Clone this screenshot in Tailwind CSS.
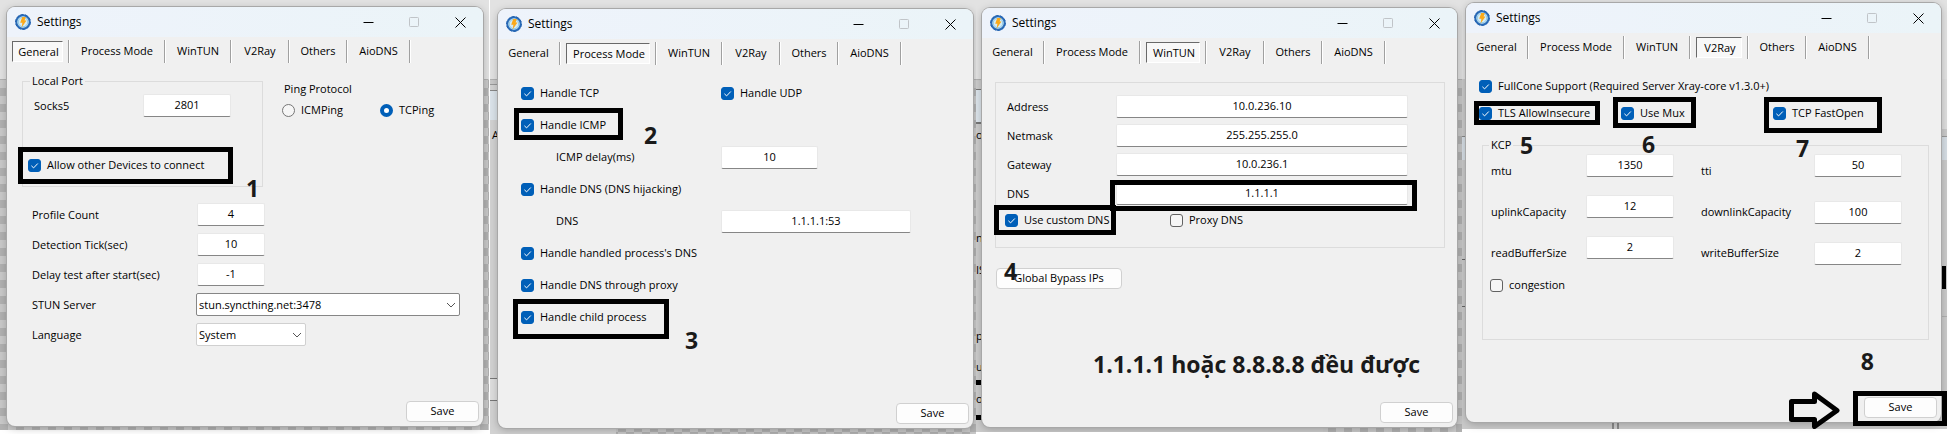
<!DOCTYPE html>
<html lang="en">
<head>
<meta charset="utf-8">
<title>Settings</title>
<script src="https://cdn.jsdelivr.net/npm/@tailwindcss/browser@4"></script>
</head>
<body class="bg-white font-['Open_Sans','Noto_Sans',sans-serif] text-[11px] leading-[14px] text-black">
<svg class="hidden">
  <symbol id="logo" viewBox="0 0 16 16">
    <circle cx="8" cy="8" r="6.7" fill="#d5ebf5" stroke="#2b6cb8" stroke-width="2"/>
    <circle cx="8" cy="8" r="7.4" fill="none" stroke="#1f5fae" stroke-width="1" stroke-dasharray="3 1.6"/>
    <circle cx="8" cy="8" r="4.8" fill="none" stroke="#8cc8e6" stroke-width="1"/>
    <path d="M7.2 3h3.6L9.6 6.4h1.9L6.6 13.4l.8-4.6H5.2z" fill="#fba919"/>
  </symbol>
  <symbol id="tick" viewBox="0 0 13 13"><path d="M3.4 6.8l2.2 2.1 4.2-4.4" fill="none" stroke="#fff" stroke-width="1"/></symbol>
  <symbol id="chevron" viewBox="0 0 10 6"><path d="M1 1l4 4 4-4" fill="none" stroke="#555" stroke-width="1"/></symbol>
</svg>

<main id="app" class="grid grid-cols-[490fr_486fr_486fr_485fr] items-start pr-1.5"></main>

<script>
const tabNames = [
  ['General', 'w-[51px]'], ['Process Mode', 'w-[84px]'], ['WinTUN', 'w-[54px]'],
  ['V2Ray', 'w-[46px]'], ['Others', 'w-[46px]'], ['AioDNS', 'w-[51px]']
];
const tabs = active => tabNames.map(([name, w]) => `
  <button role="tab" aria-selected="${name === active}" class="${w} h-[21px] shrink-0 whitespace-nowrap ${name === active
    ? 'border border-t-[#696969] border-l-[#696969] border-r-white border-b-white bg-[#f8f8f8] pl-0.5'
    : 'pb-0.5'}">${name}</button>
  <span class="mx-[5px] h-[23px] w-0.5 shrink-0 border-l border-[#a0a0a0] bg-white"></span>`).join('');

const check = (label, on = true) => `
  <label class="flex items-center gap-1.5 whitespace-nowrap">
    <span class="relative block size-[13px]">
      <input type="checkbox" ${on ? 'checked' : ''} class="block size-[13px] appearance-none rounded-[3px] border border-[#626262] bg-[#f6f6f6] checked:border-[#005fb8] checked:bg-[#005fb8]">
      ${on ? '<svg class="pointer-events-none absolute inset-0 size-[13px]"><use href="#tick"/></svg>' : ''}
    </span>${label}
  </label>`;
const radio = (label, on) => `
  <label class="flex items-center gap-1.5"><input type="radio" name="ping" ${on ? 'checked' : ''}
    class="size-[13px] appearance-none rounded-full border border-[#767676] bg-[#f6f6f6] checked:border-4 checked:border-[#005fb8] checked:bg-white">${label}</label>`;
const input = (id, value, w) => `<input id="${id}" value="${value}" class="${w} h-[23px] rounded-[2px] border border-[#e8e8e8] border-b-[#868686] bg-white pb-0.5 text-center">`;
const select = (id, value, w, edge) => `
  <div class="relative -ml-px ${w}">
    <select id="${id}" class="h-[23px] w-full appearance-none rounded-[2px] border bg-white pl-0.5 ${edge}"><option>${value}</option></select>
    <svg class="pointer-events-none absolute top-[9px] right-1 h-1.5 w-2.5"><use href="#chevron"/></svg>
  </div>`;
const mark = cls => `<span class="pointer-events-none absolute border-5 border-black ${cls}"></span>`;
const note = (text, cls) => `<span class="absolute text-[23px] leading-6 font-bold whitespace-nowrap text-[#1a1a1a] ${cls}">${text}</span>`;

const panel = ({ outer, backdrop, active, body, notes }) => `
  <section class="relative bg-[repeating-conic-gradient(#b1b1b1_0_25%,#c9c9c9_0_50%)] bg-size-[16px_16px] ${outer}">
    <div class="absolute inset-x-0 top-0 h-[79px] bg-[#e2e2e2]"></div>
    ${backdrop}
    <div class="relative flex h-[419px] flex-col rounded-lg bg-[#f0f0f0] shadow-[0_0_0_1px_#a8a8a8,0_2px_8px_rgba(0,0,0,0.25)]">
      <header class="flex h-[30px] shrink-0 items-center rounded-t-lg bg-linear-to-r from-[#eef3fb] to-[#ebf4f8] pl-2">
        <svg class="mr-1.5 size-4"><use href="#logo"/></svg>
        <h1 class="grow text-xs">Settings</h1>
        <button aria-label="Minimize" class="grid h-[29px] w-[46px] place-items-center"><svg class="size-[11px]" viewBox="0 0 11 11"><path d="M.5 5.5h10" stroke="#000"/></svg></button>
        <button aria-label="Maximize" disabled class="grid h-[29px] w-[46px] place-items-center"><svg class="size-[11px]" viewBox="0 0 11 11"><rect x=".5" y=".5" width="9" height="9" rx=".8" fill="none" stroke="#c0c4c8"/></svg></button>
        <button aria-label="Close" class="grid h-[29px] w-[46px] place-items-center"><svg class="size-[11px]" viewBox="0 0 11 11"><path d="M.5.5l10 10m0-10l-10 10" stroke="#000"/></svg></button>
      </header>
      <nav role="tablist" class="flex items-center pt-[3px] pl-[5px]">${tabs(active)}</nav>
      <div class="grow">${body}</div>
      <footer class="flex justify-end p-1"><button class="h-[21px] w-[73px] rounded-sm border border-[#d0d0d0] bg-[#fdfdfd] pb-0.5">Save</button></footer>
      ${notes}
    </div>
  </section>`;

const general = `
  <div class="flex items-start gap-[19px] pt-[11px] pl-[15px]">
    <fieldset class="h-[113px] w-[241px] shrink-0 border border-[#dcdcdc]">
      <legend class="ml-[7px] px-0.5">Local Port</legend>
      <div class="mt-1.5 flex items-center pl-[11px]"><label for="socks" class="w-[109px]">Socks5</label>${input('socks', '2801', 'w-[88px]')}</div>
      <div class="mt-[41px] pl-[5px]">${check('Allow other Devices to connect')}</div>
    </fieldset>
    <fieldset class="mt-2">
      <legend class="pl-0.5">Ping Protocol</legend>
      <div class="mt-[7px] grid grid-cols-[98px_auto]">${radio('ICMPing', false)}${radio('TCPing', true)}</div>
    </fieldset>
  </div>
  <div class="mt-4 grid auto-rows-[23px] grid-cols-[165px_auto] items-center gap-y-[7px] pl-[25px]">
    <label for="count">Profile Count</label>${input('count', '4', 'w-[68px]')}
    <label for="tick-sec">Detection Tick(sec)</label>${input('tick-sec', '10', 'w-[68px]')}
    <label for="delay">Delay test after start(sec)</label>${input('delay', '-1', 'w-[68px]')}
    <label for="stun">STUN Server</label>${select('stun', 'stun.syncthing.net:3478', 'w-[264px]', 'border-[#868686]')}
    <label for="lang">Language</label>${select('lang', 'System', 'w-[110px]', 'border-[#d0d0d0]')}
  </div>`;

const processMode = `
  <div class="grid auto-rows-[32px] grid-cols-[200px_auto] items-center pt-3 pl-[23px]">
    ${check('Handle TCP')}${check('Handle UDP')}
    <div class="col-span-2">${check('Handle ICMP')}</div>
    <label for="icmp" class="pl-[35px]">ICMP delay(ms)</label>${input('icmp', '10', 'w-[97px]')}
    <div class="col-span-2">${check('Handle DNS (DNS hijacking)')}</div>
    <label for="pdns" class="pl-[35px]">DNS</label>${input('pdns', '1.1.1.1:53', 'w-[190px]')}
    <div class="col-span-2">${check("Handle handled process's DNS")}</div>
    <div class="col-span-2">${check('Handle DNS through proxy')}</div>
    <div class="col-span-2">${check('Handle child process')}</div>
  </div>`;

const tun = `
  <div class="mt-[18px] mr-3 ml-[13px] h-[166px] border border-[#dcdcdc] pt-3">
    <div class="grid grid-cols-[109px_auto] items-center gap-y-1.5 pl-[11px]">
      <label for="addr">Address</label>${input('addr', '10.0.236.10', 'w-[292px]')}
      <label for="mask">Netmask</label>${input('mask', '255.255.255.0', 'w-[292px]')}
      <label for="gate">Gateway</label>${input('gate', '10.0.236.1', 'w-[292px]')}
      <label for="tdns">DNS</label>${input('tdns', '1.1.1.1', 'w-[292px]')}
    </div>
    <div class="mt-2 grid grid-cols-[165px_auto] pl-[9px]">${check('Use custom DNS')}${check('Proxy DNS', false)}</div>
  </div>
  <button class="mt-5 ml-3.5 h-[21px] w-[126px] rounded-sm border border-[#d0d0d0] bg-[#fdfdfd] pb-0.5">Global Bypass IPs</button>`;

const ray = `
  <div class="pt-5 pl-[13px]">${check('FullCone Support (Required Server Xray-core v1.3.0+)')}</div>
  <div class="grid grid-cols-[142px_152px_auto] pt-[13px] pl-[13px]">${check('TLS AllowInsecure')}${check('Use Mux')}${check('TCP FastOpen')}</div>
  <fieldset class="mt-[18px] mr-3 ml-4 h-[202px] border border-[#dcdcdc]">
    <legend class="ml-1.5 px-0.5">KCP</legend>
    <div class="mt-0.5 grid auto-rows-[41px] grid-cols-[95px_115px_113px_auto] items-start pl-2">
      <label for="mtu" class="pt-2.5">mtu</label>${input('mtu', '1350', 'w-[88px]')}
      <label for="tti" class="pt-2.5">tti</label>${input('tti', '50', 'w-[88px]')}
      <label for="up" class="pt-2.5">uplinkCapacity</label>${input('up', '12', 'w-[88px]')}
      <label for="down" class="pt-2.5">downlinkCapacity</label>${input('down', '100', 'w-[88px] mt-1.5')}
      <label for="rbuf" class="pt-2.5">readBufferSize</label>${input('rbuf', '2', 'w-[88px]')}
      <label for="wbuf" class="pt-2.5">writeBufferSize</label>${input('wbuf', '2', 'w-[88px] mt-1.5')}
    </div>
    <div class="pt-px pl-[7px]">${check('congestion', false)}</div>
  </fieldset>`;

document.getElementById('app').innerHTML =
  panel({
    outer: 'h-[430px] border-r border-white pt-[7px] pr-1.5 pl-[7px]', backdrop: '', active: 'General', body: general,
    notes: mark('top-[140px] left-[11px] h-[37px] w-[215px]') + note('1', 'top-[169px] left-[239px]')
  }) +
  panel({
    outer: 'h-[434px] overflow-hidden pt-[9px] pr-[3px] pl-2', active: 'Process Mode', body: processMode,
    backdrop: `<div class="absolute top-[84px] bottom-0 left-0 w-[126px] border-t border-[#999] bg-[#d2d2d2]"></div>
      <div class="absolute top-[90px] left-0 h-[30px] w-2 border-t border-[#888] bg-[#dbe3ea]"></div>
      <span class="absolute top-[128px] left-0.5">A</span>
      <div class="absolute top-[378px] left-0 h-[23px] w-2 border-y border-[#777] bg-[#dedede]"></div>`,
    notes: mark('top-[99px] left-4 h-8 w-[109px]') + note('2', 'top-[114px] left-[146px]') +
      mark('top-[290px] left-[15px] h-10 w-[156px]') + note('3', 'top-[319px] left-[187px]')
  }) +
  panel({
    outer: 'h-[432px] overflow-hidden pt-2 pr-[5px] pl-1.5', active: 'WinTUN', body: tun,
    backdrop: `<div class="absolute top-[81px] bottom-0 left-0 w-[347px] bg-[#cbcbcb]"></div>
      <div class="absolute top-[89px] left-0 h-[35px] w-1.5 border-t border-b-2 border-[#777] bg-[#dbe3ea]"></div>
      <span class="absolute top-[128px] left-0">o</span>
      <span class="absolute top-[231px] left-0">n</span>
      <span class="absolute top-[263px] left-0">IS</span>
      <span class="absolute top-[329px] left-0">p</span>
      <span class="absolute top-[360px] left-0">u</span>
      <span class="absolute top-[392px] left-0">o</span>
      <div class="absolute top-[380px] left-0 h-[5px] w-1.5 bg-black"></div>
      <div class="absolute top-[415px] left-0 h-[5px] w-1.5 bg-black"></div>`,
    notes: mark('top-[172px] left-32 h-[31px] w-[307px]') + mark('top-[197px] left-3 h-[30px] w-[122px]') +
      note('4', 'top-[251px] left-[22px]') + note('1.1.1.1 hoặc 8.8.8.8 đều được', 'top-[344px] left-[111px]')
  }) +
  panel({
    outer: 'h-[429px] pt-[3px] pr-1.5 pl-1', active: 'V2Ray', body: ray,
    backdrop: `<div class="absolute inset-x-0 top-[79px] bottom-0 bg-[#cacaca]"></div>
      <div class="absolute top-[79px] right-0 h-[50px] w-1.5 bg-[#dedede]"></div>
      <div class="absolute top-[136px] left-0 h-6 w-1 border-t border-[#888] bg-[#d5dde4]"></div>
      <div class="absolute top-[136px] right-0 h-6 w-1.5 border-t border-[#999] bg-[#d5dde4]"></div>
      <div class="absolute top-[259px] left-0 h-12 w-1 border-y border-[#666]"></div>
      <div class="absolute top-[266px] right-px h-[23px] w-[5px] bg-black"></div>
      <div class="absolute top-[316px] right-0 h-px w-1.5 bg-[#b0b0b0]"></div>
      <div class="absolute bottom-0 left-[150px] h-[7px] w-[7px] border-x-2 border-[#888]"></div>`,
    notes: mark('top-[98px] left-2 h-6 w-[126px]') + mark('top-[94px] left-[147px] h-[31px] w-[83px]') +
      mark('top-[94px] left-[298px] h-9 w-[118px]') +
      note('5', 'top-[130px] left-[54px]') + note('6', 'top-[129px] left-[176px]') + note('7', 'top-[133px] left-[330px]') +
      note('8', 'top-[346px] right-[67px]') + mark('top-[388px] -right-1.5 h-[35px] w-[94px]') +
      `<svg class="absolute top-[388px] right-[101px] h-[38px] w-[51px]" viewBox="0 0 51 38"><path d="M2.5 10.500H25.500V3L48 19.500 25.500 35.500V28.500H2.500z" fill="#f0f0f0" stroke="#000" stroke-width="5" stroke-linejoin="round"/></svg>`
  });
</script>
</body>
</html>
